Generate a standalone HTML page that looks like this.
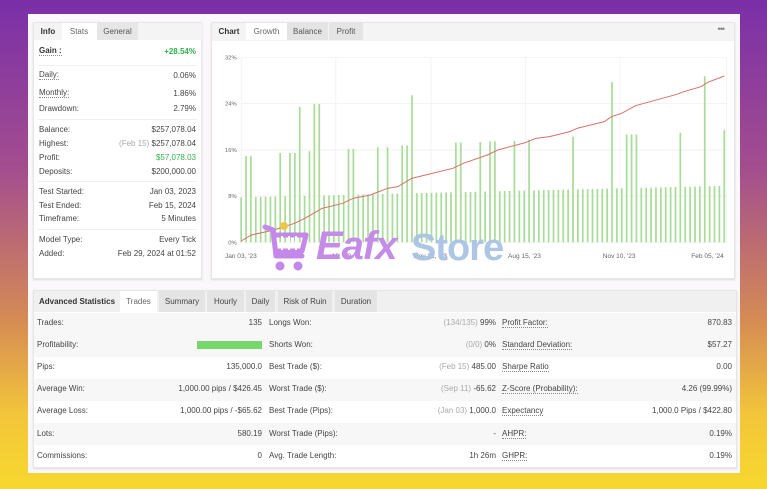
<!DOCTYPE html>
<html><head><meta charset="utf-8"><style>
*{margin:0;padding:0;box-sizing:border-box}
body{width:767px;height:489px;overflow:hidden;position:relative;font-family:"Liberation Sans",sans-serif;font-size:8px;color:#444;
background:linear-gradient(180deg,#7a2fa8 0%,#a44e8e 35%,#d58a55 65%,#f3c63a 85%,#f7d82e 100%)}
.a{position:absolute;white-space:nowrap}
.frame{position:absolute;left:28px;top:14px;width:712px;height:459px;background:#fbf8fb}
.panel{position:absolute;background:#fff;border:1px solid #e6e6e6;box-shadow:0 1px 2px rgba(0,0,0,.12)}
.l{position:absolute;left:5px}
.r{position:absolute;right:5px;text-align:right}
.u{border-bottom:1px dotted #888}
.hr{position:absolute;left:4px;right:4px;height:1px;background:#eee}
.g{color:#2fb34a}
.m{color:#aaa}
.tab{position:absolute;top:0;height:17px;line-height:17px;text-align:center;font-size:8px;white-space:nowrap}
.row{position:absolute;left:0;right:0;height:22px;line-height:22px}
</style></head><body>
<div class="frame"></div>

<div class="panel" style="left:33px;top:22px;width:169px;height:257px">
  <div class="tab" style="left:0;width:28px;background:#f4f4f4;font-weight:bold;color:#333">Info</div>
  <div class="tab" style="left:28px;width:34px;background:#fff;color:#666">Stats</div>
  <div class="tab" style="left:63px;width:41px;background:#e6e6e6;color:#555">General</div>
  <div class="tab" style="left:104px;width:64px;background:#f4f4f4"></div>
  <div class="l a u" style="top:23px;font-weight:bold;color:#333">Gain :</div><div class="r a g" style="top:24px;font-weight:bold">+28.54%</div>
  <div class="hr" style="top:42px"></div>
  <div class="l a u" style="top:47px">Daily:</div><div class="r a" style="top:48px">0.06%</div>
  <div class="l a u" style="top:65px">Monthly:</div><div class="r a" style="top:66px">1.86%</div>
  <div class="l a" style="top:81px">Drawdown:</div><div class="r a" style="top:81px">2.79%</div>
  <div class="hr" style="top:96px"></div>
  <div class="l a" style="top:102px">Balance:</div><div class="r a" style="top:102px">$257,078.04</div>
  <div class="l a" style="top:116px">Highest:</div><div class="r a" style="top:116px"><span class="m">(Feb 15)</span> $257,078.04</div>
  <div class="l a" style="top:130px">Profit:</div><div class="r a g" style="top:130px">$57,078.03</div>
  <div class="l a" style="top:144px">Deposits:</div><div class="r a" style="top:144px">$200,000.00</div>
  <div class="hr" style="top:158px"></div>
  <div class="l a" style="top:164px">Test Started:</div><div class="r a" style="top:164px">Jan 03, 2023</div>
  <div class="l a" style="top:178px">Test Ended:</div><div class="r a" style="top:178px">Feb 15, 2024</div>
  <div class="l a" style="top:191px">Timeframe:</div><div class="r a" style="top:191px">5 Minutes</div>
  <div class="hr" style="top:206px"></div>
  <div class="l a" style="top:212px">Model Type:</div><div class="r a" style="top:212px">Every Tick</div>
  <div class="l a" style="top:226px">Added:</div><div class="r a" style="top:226px">Feb 29, 2024 at 01:52</div>
</div>

<div class="panel" style="left:211px;top:22px;width:524px;height:257px">
  <div style="position:absolute;left:0;right:0;top:0;height:18px;background:#f4f4f4"></div>
  <div class="tab" style="left:0;width:34px;font-weight:bold;color:#333">Chart</div>
  <div class="tab" style="left:34px;width:41px;background:#fff;color:#666">Growth</div>
  <div class="tab" style="left:75px;width:41px;background:#e4e4e4;color:#555">Balance</div>
  <div class="tab" style="left:117px;width:34px;background:#e4e4e4;color:#555">Profit</div>
  <div class="a" style="right:10px;top:1px;color:#888;font-size:9px;letter-spacing:-1px">•••</div>
</div>
<svg id="ch" class="a" style="left:205px;top:15px" width="540" height="270" viewBox="0 0 1568 810" preserveAspectRatio="none"></svg>

<svg class="a" style="left:262px;top:222px" width="48" height="52" viewBox="0 0 48 52">
  <g fill="none" stroke="#c487ea" stroke-width="5" stroke-linejoin="round" stroke-linecap="round">
    <path d="M3 5 L11 8 L14 34 L40 34"/>
    <path d="M12 13 L44 13 L40 29 L14 29"/>
  </g>
  <g stroke="#fff" stroke-width="2"><path d="M20 14v14M27 14v14M34 14v14"/></g>
  <circle cx="18" cy="44" r="4.5" fill="#c487ea"/><circle cx="36" cy="44" r="4.5" fill="#c487ea"/>
  <circle cx="22" cy="4" r="4" fill="#f0c64a"/>
</svg>
<div class="a" style="left:316px;top:226px;font-size:40px;font-weight:bold;font-style:italic;color:#c58be8;letter-spacing:-1px;line-height:40px">Eafx</div>
<div class="a" style="left:411px;top:228px;font-size:38px;font-weight:bold;color:#a9c4e4;line-height:40px;letter-spacing:-1px;opacity:.95">Store</div>

<div class="panel" style="left:33px;top:290px;width:704px;height:178px;overflow:hidden">
  <div style="position:absolute;left:0;right:0;top:0;height:21px;background:#f0f0f0"></div>
  <div class="tab" style="left:3px;width:80px;height:21px;line-height:21px;font-weight:bold;color:#333">Advanced Statistics</div>
  <div class="tab" style="left:86px;width:37px;height:21px;line-height:21px;background:#fff;color:#666">Trades</div>
  <div class="tab" style="left:125px;width:46px;height:21px;line-height:21px;background:#e4e4e4">Summary</div>
  <div class="tab" style="left:173px;width:37px;height:21px;line-height:21px;background:#e4e4e4">Hourly</div>
  <div class="tab" style="left:212px;width:29px;height:21px;line-height:21px;background:#e4e4e4">Daily</div>
  <div class="tab" style="left:244px;width:54px;height:21px;line-height:21px;background:#e4e4e4">Risk of Ruin</div>
  <div class="tab" style="left:301px;width:42px;height:21px;line-height:21px;background:#e4e4e4">Duration</div>
  <div class="row" style="top:22px;background:#f7f7f7"></div>
  <div class="row" style="top:44px;background:#f7f7f7"></div>
  <div class="row" style="top:66px;background:#fff"></div>
  <div class="row" style="top:88px;background:#f7f7f7"></div>
  <div class="row" style="top:110px;background:#fff"></div>
  <div class="row" style="top:132px;background:#f7f7f7"></div>
  <div class="row" style="top:154px;background:#fff"></div>
</div>
<div id="tbl"></div>

<script>
var s='';
function ln(x1,y1,x2,y2,c,w){s+='<line x1="'+x1+'" y1="'+y1+'" x2="'+x2+'" y2="'+y2+'" stroke="'+c+'" stroke-width="'+w+'"/>';}
var ys=[[128,'32%'],[266,'24%'],[405,'16%'],[543,'8%'],[682,'0%']];
ys.forEach(function(a){ln(105,a[0],1515,a[0],'#eee',2);s+='<text x="92" y="'+(a[0]+6)+'" font-size="17" fill="#666" text-anchor="end" font-family="Liberation Sans">'+a[1]+'</text>';});
[380,656,930,1205,1515,105].forEach(function(x){ln(x,128,x,682,'#eee',2);});
var tall={120:15,135:15,222:15.5,250:15.5,265:15.5,281:23.5,308:15.8,322:24,338:24,410:16.2,425:16.2,497:16.5,525:16.5,570:16.8,584:16.8,597:25.5,728:17.3,742:17.3,800:17.4,830:17.5,845:17.5,903:17.6,946:17.8,1075:18.3,1176:27.8,1220:18.7,1234:18.7,1248:18.7,1380:19,1452:28.8,1508:19.5};
var tk=Object.keys(tall).map(Number);
for(var i=0;i<100;i++){var x=105+i*14.17;var h=7.8+2*(i/99);
 for(var k=0;k<tk.length;k++){if(Math.abs(tk[k]-x)<7){h=tall[tk[k]];break;}}
 var y=682-h*17.3;s+='<rect x="'+(x-2.5)+'" y="'+y+'" width="5" height="'+(682-y)+'" fill="#a8dc98"/>';}
var p=[[105,678],[135,660],[200,645],[260,625],[290,610],[340,580],[400,565],[430,550],[480,540],[530,520],[560,515],[600,490],[720,460],[750,445],[820,420],[850,405],[930,383],[960,370],[1000,365],[1060,350],[1080,340],[1160,320],[1180,305],[1210,295],[1250,272],[1370,238],[1390,230],[1440,215],[1460,202],[1508,183]];
s+='<polyline fill="none" stroke="#d9706a" stroke-width="3" points="'+p.map(function(a){return a.join(',')}).join(' ')+'"/>';
[[58,"Jan 03, '23"],[330,"Mar 13, '23"],[605,"May 31, '23"],[880,"Aug 15, '23"],[1155,"Nov 10, '23"],[1412,"Feb 05, '24"]].forEach(function(a){s+='<text x="'+a[0]+'" y="729" font-size="19" fill="#666" font-family="Liberation Sans">'+a[1]+'</text>';});
document.getElementById('ch').innerHTML=s;
var rows=[
["Trades:","135","Longs Won:","<span class=m>(134/135)</span> 99%","Profit Factor:","870.83"],
["Profitability:","BAR","Shorts Won:","<span class=m>(0/0)</span> 0%","Standard Deviation:","$57.27"],
["Pips:","135,000.0","Best Trade ($):","<span class=m>(Feb 15)</span> 485.00","Sharpe Ratio","0.00"],
["Average Win:","1,000.00 pips / $426.45","Worst Trade ($):","<span class=m>(Sep 11)</span> -65.62","Z-Score (Probability):","4.26 (99.99%)"],
["Average Loss:","1,000.00 pips / -$65.62","Best Trade (Pips):","<span class=m>(Jan 03)</span> 1,000.0","Expectancy","1,000.0 Pips / $422.80"],
["Lots:","580.19","Worst Trade (Pips):","-","AHPR:","0.19%"],
["Commissions:","0","Avg. Trade Length:","1h 26m","GHPR:","0.19%"]];
var t='';
rows.forEach(function(r,i){var y=318+i*22.1;
 t+='<div class="a" style="left:37px;top:'+y+'px">'+r[0]+'</div>';
 if(r[1]=='BAR')t+='<div class="a" style="left:197px;top:'+(y+1)+'px;width:65px;height:8px;background:#76d86a"></div>';
 else t+='<div class="a" style="right:'+(767-262)+'px;top:'+y+'px">'+r[1]+'</div>';
 t+='<div class="a" style="left:269px;top:'+y+'px">'+r[2]+'</div>';
 t+='<div class="a" style="right:'+(767-496)+'px;top:'+y+'px">'+r[3]+'</div>';
 t+='<div class="a u" style="left:502px;top:'+y+'px">'+r[4]+'</div>';
 t+='<div class="a" style="right:'+(767-732)+'px;top:'+y+'px">'+r[5]+'</div>';});
document.getElementById('tbl').innerHTML=t;
</script>
</body></html>
